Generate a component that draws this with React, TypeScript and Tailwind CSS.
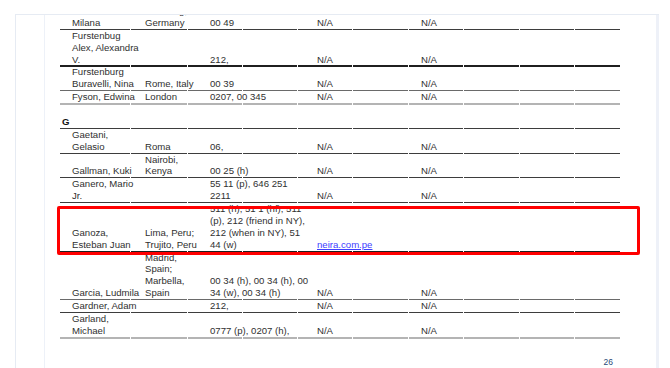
import React from "react";

type Tone = "dark" | "thick" | "soft" | "mid";

type Row = {
  cells?: string[][];
  heading?: string;
  link?: string;
  tone: Tone;
};

const NB = "\u00a0";

const rows: Row[] = [
  { cells: [[NB, "Milana"], ["Hamburg,", "Germany"], ["00 49"], ["N/A"], ["N/A"]], tone: "dark" },
  { cells: [["Furstenbug", "Alex, Alexandra", "V."], [], ["212,"], ["N/A"], ["N/A"]], tone: "thick" },
  { cells: [["Furstenburg", "Buravelli, Nina"], ["Rome, Italy"], ["00 39"], ["N/A"], ["N/A"]], tone: "mid" },
  { cells: [["Fyson, Edwina"], ["London"], ["0207, 00 345"], ["N/A"], ["N/A"]], tone: "soft" },
  { heading: "G", tone: "dark" },
  { cells: [["Gaetani,", "Gelasio"], ["Roma"], ["06,"], ["N/A"], ["N/A"]], tone: "dark" },
  { cells: [["Gallman, Kuki"], ["Nairobi,", "Kenya"], ["00 25 (h)"], ["N/A"], ["N/A"]], tone: "dark" },
  { cells: [["Ganero, Mario", "Jr."], [], ["55 11 (p), 646 251", "2211"], ["N/A"], ["N/A"]], tone: "dark" },
  {
    cells: [
      ["Ganoza,", "Esteban Juan"],
      ["Lima, Peru;", "Trujito, Peru"],
      ["511 (h), 51 1 (hf), 511", "(p), 212 (friend in NY),", "212 (when in NY), 51", "44 (w)"],
      [],
      [],
    ],
    link: "neira.com.pe",
    tone: "thick",
  },
  {
    cells: [
      ["Garcia, Ludmila"],
      ["Madrid,", "Spain;", "Marbella,", "Spain"],
      ["00 34 (h), 00 34 (h), 00", "34 (w), 00 34 (h)"],
      ["N/A"],
      ["N/A"],
    ],
    tone: "mid",
  },
  { cells: [["Gardner, Adam"], [], ["212,"], ["N/A"], ["N/A"]], tone: "dark" },
  { cells: [["Garland,", "Michael"], [], ["0777 (p), 0207 (h),"], ["N/A"], ["N/A"]], tone: "soft" },
];

const toneClass: Record<Tone, string> = {
  dark: "h-px bg-[#3d3d3d]",
  thick: "h-[2px] bg-[#1f1f1f]",
  mid: "h-px bg-[#6a6a6a]",
  soft: "h-[2px] bg-[#b4b4b4]",
};

function Rule({ tone }: { tone: Tone }) {
  const wide = tone === "thick" || tone === "soft";
  return (
    <div
      className={`grid grid-cols-[70px_56px_54px_54px_54px_55px_54px_55px_54px_45px] gap-x-px ${
        wide ? "-mb-px" : ""
      }`}
    >
      {Array.from({ length: 10 }).map((_, i) => (
        <div key={i} className={toneClass[tone]} />
      ))}
    </div>
  );
}

function Cell({ lines, link }: { lines: string[]; link?: string }) {
  return (
    <div className="flex flex-col justify-end">
      {lines.map((l, i) => (
        <div key={i} className="whitespace-nowrap">
          {l}
        </div>
      ))}
      {link && <div className="whitespace-nowrap text-[#4040ff] underline">{link}</div>}
    </div>
  );
}

function TableRow({ row }: { row: Row }) {
  return (
    <div>
      {row.heading ? (
        <div className="pl-[2px]">
          <div>{NB}</div>
          <div className="font-bold text-[#111]">{row.heading}</div>
        </div>
      ) : (
        <div className="grid grid-cols-[73px_65px_107px_104px_1fr] items-end pl-[12px]">
          {row.cells!.map((c, i) => (
            <Cell key={i} lines={c} link={i === 3 ? row.link : undefined} />
          ))}
        </div>
      )}
      <Rule tone={row.tone} />
    </div>
  );
}

export default function App() {
  return (
    <div
      className="relative h-[368px] w-[670px] overflow-hidden bg-white pl-[15px] pt-[14px]"
      style={{ fontFamily: '"Liberation Sans", Arial, sans-serif' }}
    >
      <div className="flex h-[360px] w-[644px] border-l border-t border-[#e6ebf3]">
        <div className="w-[29px] shrink-0 border-r border-[#edf1f8]" />
        <div className="w-[611px] shrink-0 overflow-hidden pl-[15px]">
          <div className="-mt-[10px] w-[560px] text-[9.6px] leading-[11.88px] text-[#303030]">
            {rows.map((r, i) => (
              <TableRow key={i} row={r} />
            ))}
            <div className="mt-[19px] pr-[7px] text-right text-[8.5px] leading-[10px] text-[#2a4a78]">26</div>
          </div>
        </div>
        <div className="w-[3px] shrink-0 bg-[#eef1f8]" />
      </div>

      {/* highlight box */}
      <div className="absolute left-[57px] top-[206px] h-[49px] w-[583px] rounded-[2px] border-[3px] border-[#ff0000]" />
    </div>
  );
}
